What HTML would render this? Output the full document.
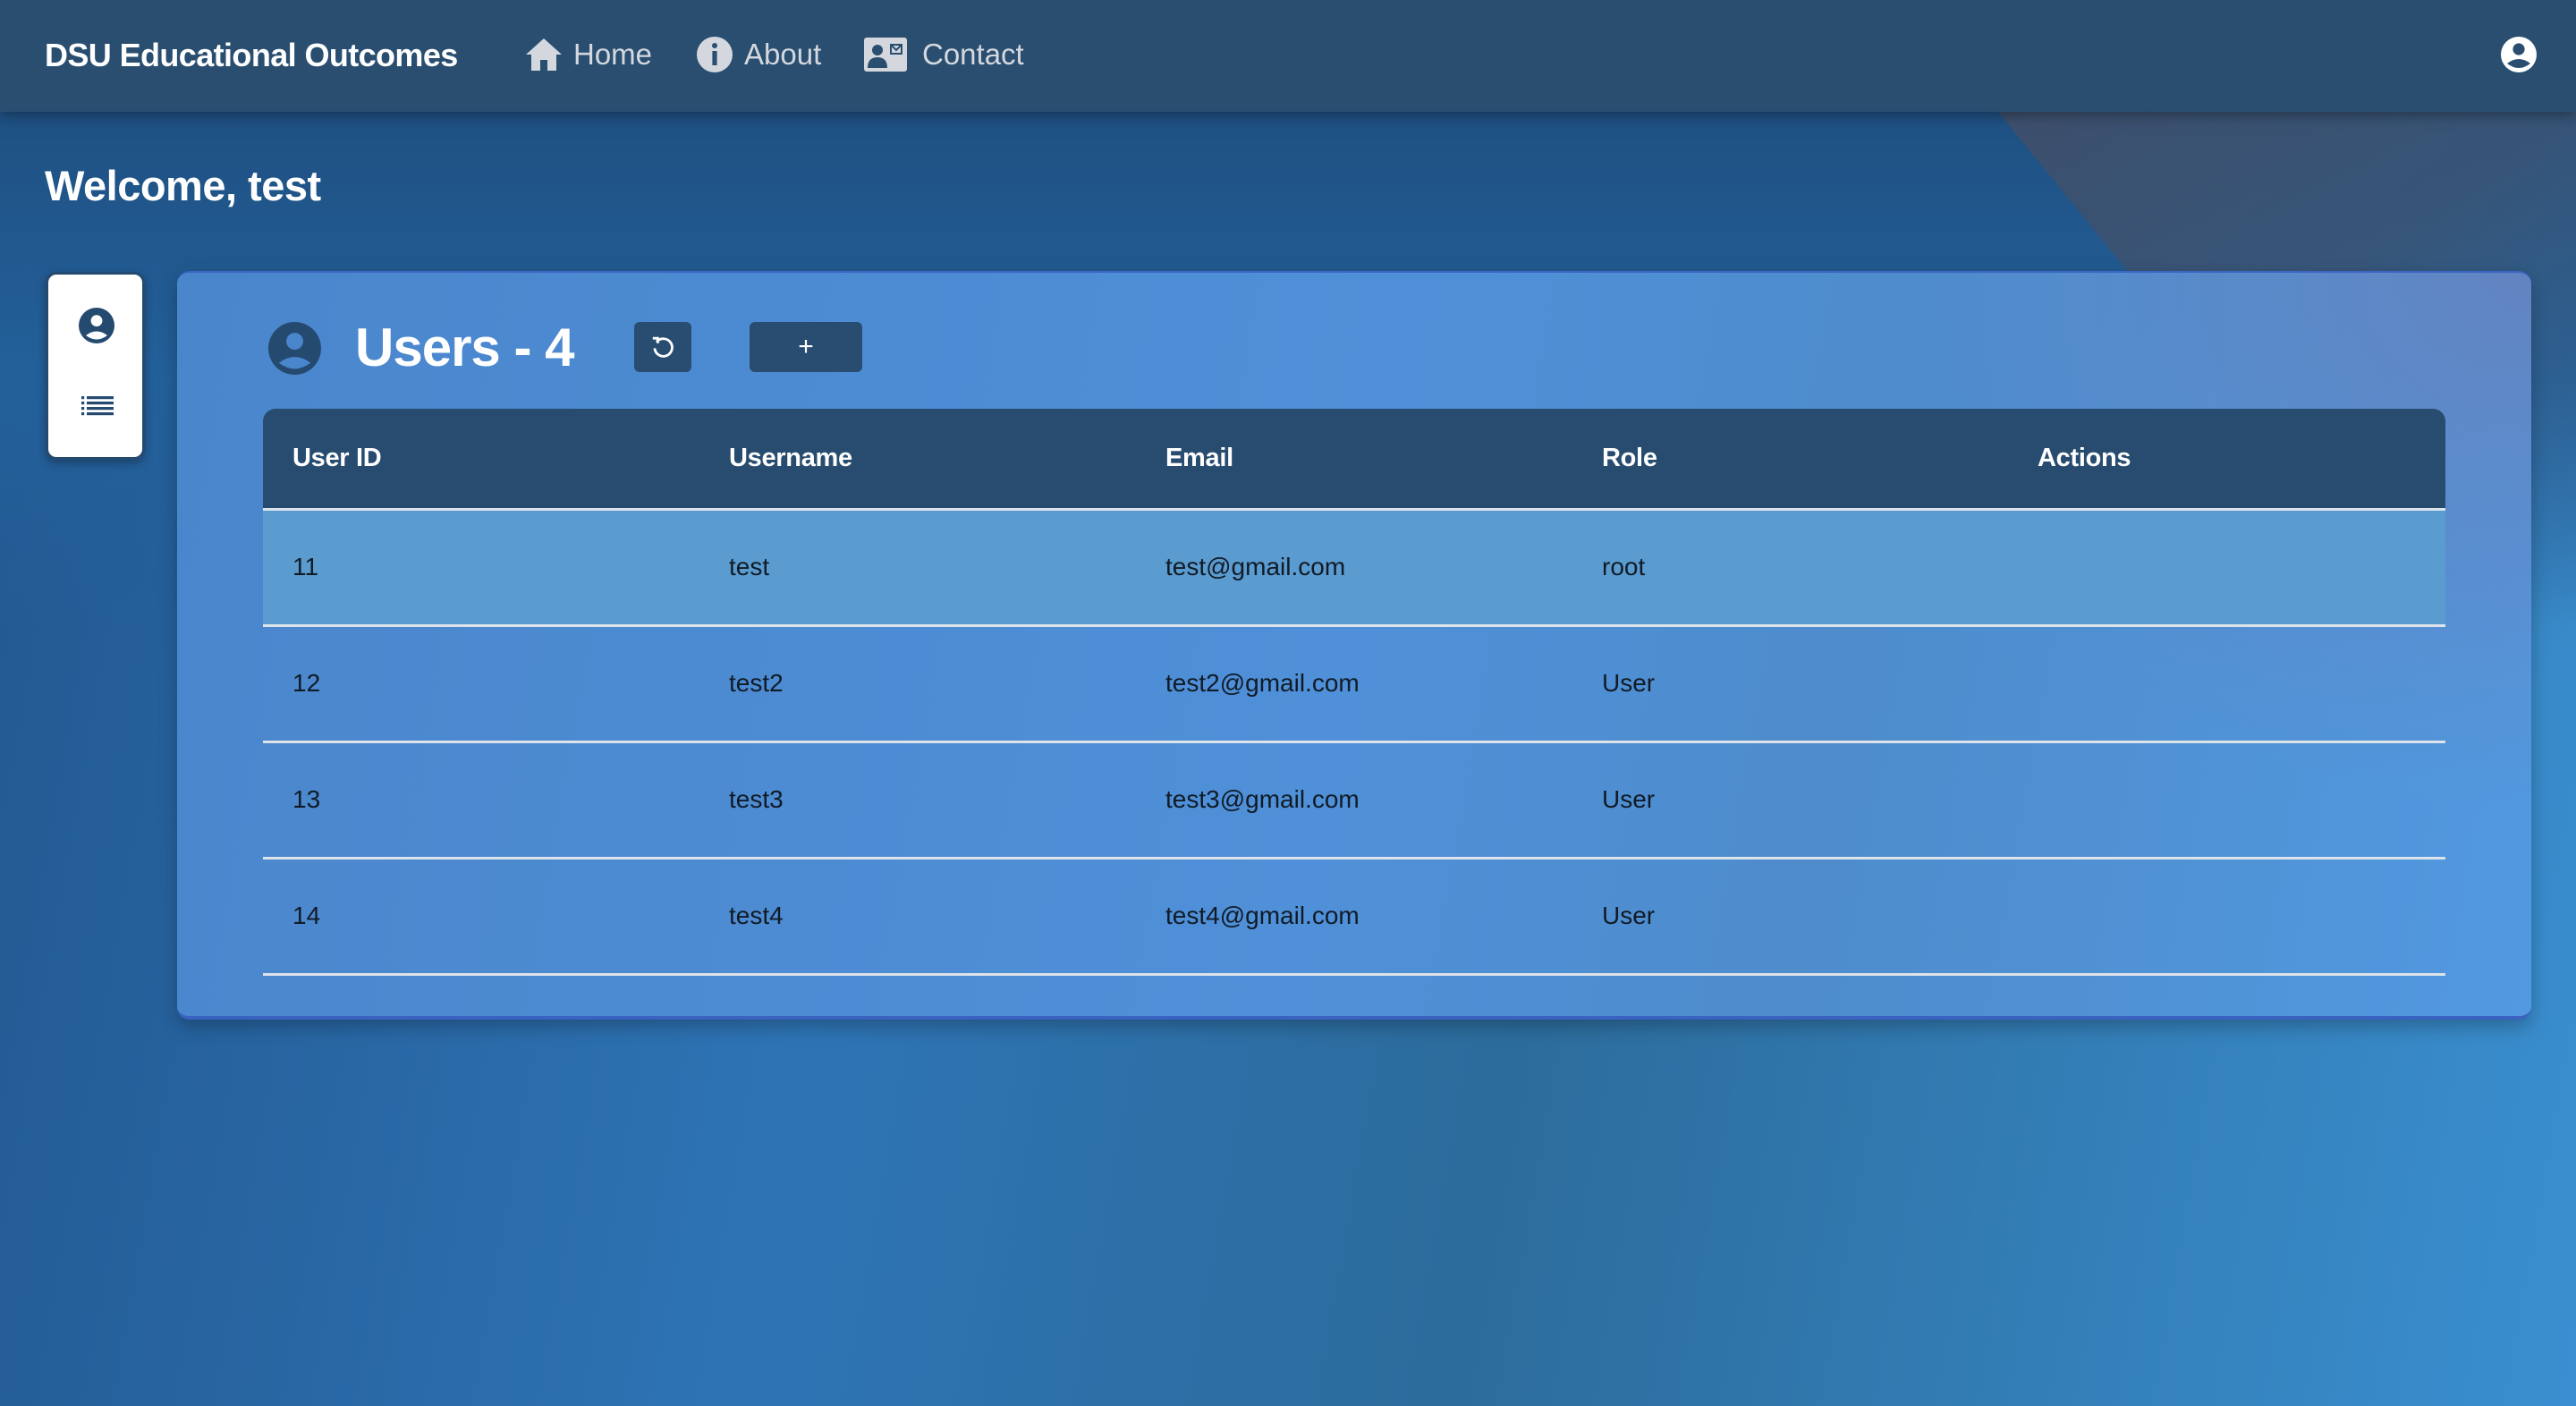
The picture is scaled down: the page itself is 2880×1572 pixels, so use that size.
<!DOCTYPE html>
<html><head><meta charset="utf-8"><style>
*{margin:0;padding:0;box-sizing:border-box}
body{width:2880px;height:1572px;overflow:hidden;font-family:"Liberation Sans",sans-serif;position:relative;
background:linear-gradient(100deg,#22578f 0%,#2e74b5 35%,#2c6c9c 60%,#3a8fd0 100%);}
.topbg{position:absolute;left:0;top:0;width:2880px;height:700px;background:linear-gradient(180deg,#1d4a78 0%,#23609a 60%,rgba(40,110,170,0) 100%)}
.dark{position:absolute;left:0;top:0;width:2880px;height:1572px}
nav{position:absolute;left:0;top:0;width:2880px;height:125px;background:#294e70;box-shadow:0 4px 14px rgba(0,0,0,.35);color:#d8dde3}
.brand{position:absolute;left:50px;top:41px;font-size:36px;font-weight:bold;color:#fff;letter-spacing:-0.6px}
.ni{position:absolute;top:42px;font-size:33px;color:#d4d8de}
.welcome{position:absolute;left:50px;top:180px;font-size:47px;font-weight:bold;color:#fff;letter-spacing:-0.5px}
.side{position:absolute;left:51px;top:304px;width:111px;height:210px;background:#fff;border-radius:12px;border:3px solid #254a70;box-shadow:0 4px 10px rgba(0,0,0,.3)}
.card{position:absolute;left:198px;top:303px;width:2632px;height:837px;border-radius:14px;
background:radial-gradient(ellipse 700px 600px at 2632px 0px,rgba(100,130,190,.9),rgba(100,130,190,0)),linear-gradient(100deg,#4a86cc 0%,#4f90d8 50%,#4e8ccc 70%,#5299e0 100%);border-bottom:4px solid #3a62c0;border-top:2px solid #3c66c4;box-shadow:0 8px 20px rgba(0,0,0,.25)}
.title{position:absolute;left:397px;top:354px;font-size:60px;font-weight:bold;color:#fff;letter-spacing:-1px}
.btn{position:absolute;top:360px;height:56px;background:#284d70;border-radius:6px;color:#fff;text-align:center;line-height:56px;font-size:30px}
table{position:absolute;left:294px;top:457px;width:2440px;border-collapse:collapse}
th{background:#274c6f;color:#fff;font-size:29px;text-align:left;height:112px;padding-left:33px;font-weight:bold;letter-spacing:-0.3px}
th:first-child{border-top-left-radius:14px}th:last-child{border-top-right-radius:14px}
td{height:130px;font-size:28px;color:#111b26;padding-left:33px;border-top:3px solid #dde3ea}
tr:last-child td{border-bottom:3px solid #dde3ea}
tr.hl td{background:#5a9bd0}
</style></head><body>
<div class="topbg"></div>
<svg class="dark" width="2880" height="1572"><defs>
<linearGradient id="g" x1="0" y1="0" x2="0.6" y2="1"><stop offset="0" stop-color="#3d4f6c" stop-opacity="1"/><stop offset="0.45" stop-color="#3c5574" stop-opacity=".8"/><stop offset="1" stop-color="#3a6a9a" stop-opacity="0"/></linearGradient></defs>
<polygon points="2230,120 2880,120 2880,900 2700,700" fill="url(#g)"/></svg>
<nav>
<div class="brand">DSU Educational Outcomes</div>
<svg style="position:absolute;left:588px;top:43px" width="40" height="36" viewBox="0 0 20 18"><path d="M10 0 L20 9 H17 V18 H12 V12 H8 V18 H3 V9 H0 Z" fill="#d4d8de"/></svg>
<div class="ni" style="left:641px">Home</div>
<svg style="position:absolute;left:779px;top:41px" width="40" height="40" viewBox="0 0 20 20"><circle cx="10" cy="10" r="10" fill="#d4d8de"/><circle cx="10" cy="5" r="1.5" fill="#294e70"/><rect x="8.7" y="8" width="2.6" height="8" fill="#294e70"/></svg>
<div class="ni" style="left:832px">About</div>
<svg style="position:absolute;left:966px;top:42px" width="48" height="38" viewBox="0 0 24 19"><rect width="24" height="19" rx="1.5" fill="#d4d8de"/><circle cx="7.5" cy="7" r="3" fill="#294e70"/><path d="M2 17 Q2 11 7.5 11 Q13 11 13 17Z" fill="#294e70"/><path d="M15 4 H21 V9 H15 Z M15 4 L18 7 L21 4" fill="none" stroke="#294e70" stroke-width="1"/></svg>
<div class="ni" style="left:1031px">Contact</div>
<svg style="position:absolute;left:2796px;top:41px" width="40" height="40" viewBox="0 0 20 20"><circle cx="10" cy="10" r="10" fill="#fff"/><circle cx="10" cy="7" r="3.3" fill="#294e70"/><path d="M3.5 15 Q10 10 16.5 15 Q10 20 3.5 15Z" fill="#294e70"/></svg>
</nav>
<div class="welcome">Welcome, test</div>
<div class="side">
<svg style="position:absolute;left:34px;top:36px" width="40" height="42" viewBox="0 0 20 20"><circle cx="10" cy="10" r="10" fill="#254a70"/><circle cx="10" cy="7.3" r="3.2" fill="#fff"/><path d="M4 15.5 Q10 11 16 15.5 Q10 20 4 15.5Z" fill="#fff"/></svg>
<svg style="position:absolute;left:37px;top:136px" width="36" height="22" viewBox="0 0 18 11"><g fill="#254a70"><rect x="0" y="0" width="1.6" height="1.6"/><rect x="3" y="0" width="15" height="1.6"/><rect x="0" y="3" width="1.6" height="1.6"/><rect x="3" y="3" width="15" height="1.6"/><rect x="0" y="6" width="1.6" height="1.6"/><rect x="3" y="6" width="15" height="1.6"/><rect x="0" y="9" width="1.6" height="1.6"/><rect x="3" y="9" width="15" height="1.6"/></g></svg>
</div>
<div class="card"></div>
<svg style="position:absolute;left:300px;top:360px" width="59" height="59" viewBox="0 0 20 20"><circle cx="10" cy="10" r="10" fill="#254a70"/><circle cx="10" cy="7.3" r="3.2" fill="#4a86cc"/><path d="M4 15.5 Q10 11 16 15.5 Q10 20 4 15.5Z" fill="#4a86cc"/></svg>
<div class="title">Users - 4</div>
<div class="btn" style="left:709px;width:64px"><svg style="margin-top:14px" width="28" height="28" viewBox="0 0 20 20"><path d="M5 6 A7 7 0 1 1 3.5 11" fill="none" stroke="#fff" stroke-width="2"/><path d="M2 3 L6 3 L6 7" fill="none" stroke="#fff" stroke-width="2"/></svg></div>
<div class="btn" style="left:838px;width:126px">+</div>
<table>
<tr><th style="width:488px">User ID</th><th style="width:488px">Username</th><th style="width:488px">Email</th><th style="width:487px">Role</th><th>Actions</th></tr>
<tr class="hl"><td>11</td><td>test</td><td>test@gmail.com</td><td>root</td><td></td></tr>
<tr><td>12</td><td>test2</td><td>test2@gmail.com</td><td>User</td><td></td></tr>
<tr><td>13</td><td>test3</td><td>test3@gmail.com</td><td>User</td><td></td></tr>
<tr><td>14</td><td>test4</td><td>test4@gmail.com</td><td>User</td><td></td></tr>
</table>
</body></html>
